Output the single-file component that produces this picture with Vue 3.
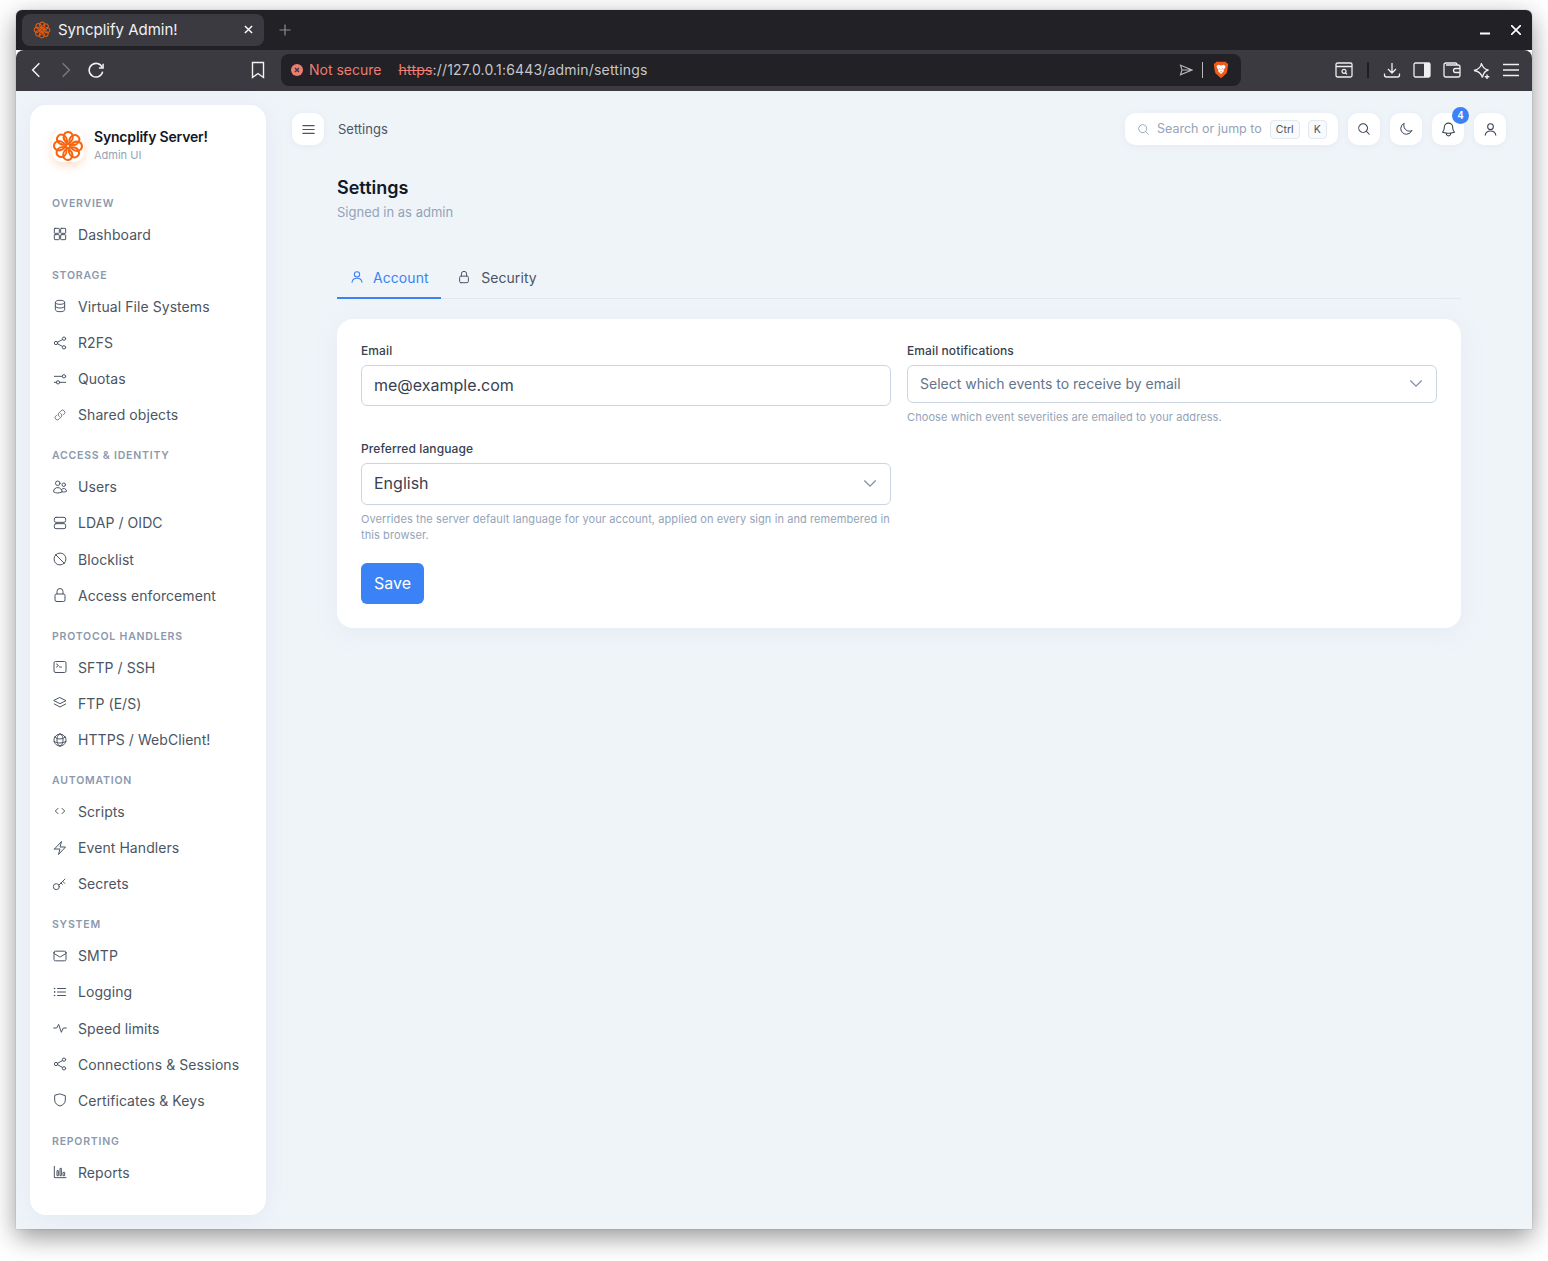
<template>
  <div class="shot">
    <div class="window">
      <div class="tabbar">
        <div class="tab">
          <svg class="tab-logo" viewBox="0 0 32 32" fill="none" stroke="#e85a0c" stroke-width="1.9">
            <path v-for="a in petals" :key="a" :d="petal" :transform="`rotate(${a} 16 16)`" />
          </svg>
          <span class="tab-title">Syncplify Admin!</span>
          <svg class="tab-x" viewBox="0 0 10 10" stroke="#fff" stroke-width="1.6"><path d="M1 1l8 8M9 1l-8 8" /></svg>
        </div>
        <svg class="new-tab" viewBox="0 0 12 12" stroke="#8c8c92" stroke-width="1.2"><path d="M6 .5v11M.5 6h11" /></svg>
        <div class="win-btns">
          <svg class="win-min" viewBox="0 0 10 10" stroke="#fff" stroke-width="1.8"><path d="M0 8.500h10" /></svg>
          <svg class="win-close" viewBox="0 0 10 10" stroke="#fff" stroke-width="1.7"><path d="M0 0l10 10M10 0L0 10" /></svg>
        </div>
      </div>

      <div class="toolbar">
        <div class="nav-btns">
          <svg class="nav" viewBox="0 0 24 24" fill="none" stroke="#f2f2f3" stroke-width="1.8"><path d="M16 4l-8 8 8 8" /></svg>
          <svg class="nav" viewBox="0 0 24 24" fill="none" stroke="#77777c" stroke-width="1.8"><path d="M8 4l8 8-8 8" /></svg>
          <svg class="nav" viewBox="0 0 24 24" fill="none" stroke="#f2f2f3" stroke-width="1.8"><path d="M19.500 9A8.200 8.200 0 1 0 20 14" /><path d="M20.500 4.500v5h-5" /></svg>
        </div>
        <svg class="bookmark" viewBox="0 0 14 18" fill="none" stroke="#f2f2f3" stroke-width="1.4"><path d="M1.500 1.500h11v15L7 12.500l-5.500 4z" /></svg>
        <div class="urlbar">
          <svg class="warn" viewBox="0 0 12 12"><circle cx="6" cy="6" r="6" fill="#ee7c70" /><path d="M4 4l4 4M8 4l-4 4" stroke="#3a3a40" stroke-width="1.5" /></svg>
          <span class="not-secure">Not secure</span>
          <span class="url"><s class="https">https</s>://127.0.0.1:6443/admin/settings</span>
          <svg class="send" viewBox="0 0 14 12" fill="none" stroke="#b9b9bd" stroke-width="1.1"><path d="M1.500 1.200L13 6 1.500 10.800 3 6zM3 6h10" /></svg>
          <span class="url-sep"></span>
          <svg class="brave" viewBox="0 0 16 18">
            <path d="M3.400.8h9.200l1.300 1.500 1.300.4-.6 5.300-1 4.200L8 17.300 2.400 12.200l-1-4.200L.8 2.700l1.300-.4z" fill="#f25a1c" />
            <path d="M3.500 5l2-1.200L8 4.500l2.500-.7 2 1.200-.8 2.500-1.200 1 .5 1.500L8 13 5 10l.5-1.500-1.200-1z" fill="#fff" />
            <path d="M6.300 7.600l1 .8M9.700 7.600l-1 .8M8 10v1.300" stroke="#f25a1c" stroke-width=".9" />
          </svg>
        </div>
        <div class="tool-icons">
          <svg class="ti" viewBox="0 0 18 16" fill="none" stroke="#efeff0" stroke-width="1.3"><rect x="1" y="1" width="16" height="14" rx="1.500" /><path d="M1 4.500h16" /><circle cx="9" cy="9.300" r="2" stroke-width="1.2" /><path d="M10.500 10.800l1.500 1.500" stroke-width="1.2" /></svg>
          <span class="tool-sep"></span>
          <svg class="ti" viewBox="0 0 18 16" fill="none" stroke="#efeff0" stroke-width="1.3"><path d="M9 1v10M5 7l4 4 4-4M1.500 11.500V13a2 2 0 0 0 2 2h11a2 2 0 0 0 2-2v-1.500" /></svg>
          <svg class="ti ti-gap" viewBox="0 0 18 16"><rect x="1" y="1" width="16" height="14" rx="1.500" fill="none" stroke="#efeff0" stroke-width="1.3" /><rect x="11" y="1" width="6" height="14" fill="#efeff0" /></svg>
          <svg class="ti ti-gap" viewBox="0 0 18 16" fill="none" stroke="#efeff0" stroke-width="1.3"><path d="M14 3v-.5A1.500 1.500 0 0 0 12.500 1H3a2 2 0 0 0-2 2v10a2 2 0 0 0 2 2h12a2 2 0 0 0 2-2V5a2 2 0 0 0-2-2H3" /><path d="M17 6.500h-4.500a2 2 0 0 0 0 4H17" /></svg>
          <svg class="ti ti-gap ti-star" viewBox="0 0 18 18" fill="none" stroke="#efeff0" stroke-width="1.3"><path d="M8.500 1c.6 4 2.500 6.200 7 7-3.600.8-5.200 2.500-6 7.500C8 11 6 9 1 8.500 5.500 7.500 8 5 8.500 1z" /><path d="M14 12.500V17M11.800 14.800h4.500" stroke-width="1.4" /></svg>
          <svg class="ti ti-gap ti-menu" viewBox="0 0 16 14" stroke="#efeff0" stroke-width="1.3"><path d="M0 1.500h16M0 7h16M0 12.500h16" /></svg>
        </div>
      </div>

      <div class="page">
        <aside class="sidebar">
          <div class="brand">
            <div class="brand-logo">
              <svg viewBox="0 0 32 32" fill="none" stroke="#f9640f" stroke-width="2">
                <path v-for="a in petals" :key="a" :d="petal" :transform="`rotate(${a} 16 16)`" />
              </svg>
            </div>
            <div class="brand-text">
              <div class="brand-name">Syncplify Server!</div>
              <div class="brand-sub">Admin UI</div>
            </div>
          </div>

          <div v-for="group in nav" :key="group.title" class="nav-group">
            <div class="nav-title">{{ group.title }}</div>
            <div v-for="item in group.items" :key="item.label" class="nav-item">
              <svg class="nav-icon" :class="{ sm: item.small }" viewBox="0 0 24 24" fill="none" stroke="#4b5563" stroke-width="1.5" stroke-linecap="round" stroke-linejoin="round">
                <path :d="icons[item.icon]" />
              </svg>
              <span>{{ item.label }}</span>
            </div>
          </div>
        </aside>

        <main class="main">
          <header class="topbar">
            <button class="icon-btn">
              <svg viewBox="0 0 24 24" fill="none" stroke="#4b5563" stroke-width="1.5" stroke-linecap="round"><path d="M4 6.500h16M4 12h16M4 17.500h16" /></svg>
            </button>
            <div class="crumb">Settings</div>
            <div class="search">
              <svg class="search-icon" viewBox="0 0 24 24" fill="none" stroke="#94a3b8" stroke-width="1.7" stroke-linecap="round"><path :d="icons.search" /></svg>
              <span class="search-text">Search or jump to</span>
              <kbd class="key key-ctrl">Ctrl</kbd>
              <kbd class="key key-k">K</kbd>
            </div>
            <button class="icon-btn small">
              <svg viewBox="0 0 24 24" fill="none" stroke="#374151" stroke-width="1.8" stroke-linecap="round"><path :d="icons.search" /></svg>
            </button>
            <button class="icon-btn small">
              <svg viewBox="0 0 24 24" fill="none" stroke="#374151" stroke-width="1.7" stroke-linecap="round" stroke-linejoin="round"><path :d="icons.moon" /></svg>
            </button>
            <button class="icon-btn">
              <svg viewBox="0 0 24 24" fill="none" stroke="#374151" stroke-width="1.5" stroke-linecap="round" stroke-linejoin="round"><path :d="icons.bell" /></svg>
              <span class="badge">4</span>
            </button>
            <button class="icon-btn">
              <svg viewBox="0 0 24 24" fill="none" stroke="#374151" stroke-width="1.5" stroke-linecap="round" stroke-linejoin="round"><path :d="icons.user" /></svg>
            </button>
          </header>

          <section class="content">
            <h1>Settings</h1>
            <p class="signed">Signed in as admin</p>

            <div class="tabs">
              <div class="pane-tab active">
                <svg class="tab-user" viewBox="0 0 24 24" fill="none" stroke="#3b82f6" stroke-width="1.6" stroke-linecap="round" stroke-linejoin="round"><path :d="icons.user" /></svg>
                Account
              </div>
              <div class="pane-tab">
                <svg class="tab-lock" viewBox="0 0 24 24" fill="none" stroke="#4b5563" stroke-width="1.7" stroke-linecap="round" stroke-linejoin="round"><path :d="icons.lock" /></svg>
                Security
              </div>
            </div>

            <div class="card">
              <div class="form-grid">
                <div class="field">
                  <label>Email</label>
                  <div class="control control-email">me@example.com</div>
                </div>
                <div class="field">
                  <label>Email notifications</label>
                  <div class="control control-multi">
                    <span class="placeholder">Select which events to receive by email</span>
                    <svg class="chev" viewBox="0 0 16 10" fill="none" stroke="#8391a6" stroke-width="1.5"><path d="M1.500 1.500L8 8l6.500-6.500" /></svg>
                  </div>
                  <div class="hint">Choose which event severities are emailed to your address.</div>
                </div>
              </div>
              <div class="field lang">
                <label>Preferred language</label>
                <div class="control control-lang">
                  <span>English</span>
                  <svg class="chev" viewBox="0 0 16 10" fill="none" stroke="#8391a6" stroke-width="1.5"><path d="M1.500 1.500L8 8l6.500-6.500" /></svg>
                </div>
                <div class="hint">Overrides the server default language for your account, applied on every sign in and remembered in this browser.</div>
              </div>
              <button class="save">Save</button>
            </div>
          </section>
        </main>
      </div>
    </div>
  </div>
</template>

<script setup>
const petals = [0, 45, 90, 135, 180, 225, 270, 315]

// one loop of the flower logo, leans to the side so the loops overlap
const petal = 'M16.500 14C12.500 11.500 11 8 12 5c1.200-3.500 6-4 8-1 2 3 .5 7-3.500 10z'

const icons = {
  grid: 'M4.500 3.500h5.500a1 1 0 0 1 1 1V10a1 1 0 0 1-1 1H4.500a1 1 0 0 1-1-1V4.500a1 1 0 0 1 1-1zM14 3.500h5.500a1 1 0 0 1 1 1V10a1 1 0 0 1-1 1H14a1 1 0 0 1-1-1V4.500a1 1 0 0 1 1-1zM4.500 13H10a1 1 0 0 1 1 1v5.500a1 1 0 0 1-1 1H4.500a1 1 0 0 1-1-1V14a1 1 0 0 1 1-1zM14 13h5.500a1 1 0 0 1 1 1v5.500a1 1 0 0 1-1 1H14a1 1 0 0 1-1-1V14a1 1 0 0 1 1-1z',
  db: 'M5 6.500C5 4.500 8 3.500 12 3.500s7 1 7 3v11c0 2-3 3-7 3s-7-1-7-3zM5 6.500c0 2 3 3 7 3s7-1 7-3M5 12c0 2 3 3 7 3s7-1 7-3',
  share: 'M8.300 10.800l7.400-3.900M8.300 13.200l7.400 3.900M8.500 12a2.500 2.500 0 1 1-5 0 2.500 2.500 0 0 1 5 0zM20.500 5.500a2.500 2.500 0 1 1-5 0 2.500 2.500 0 0 1 5 0zM20.500 18.500a2.500 2.500 0 1 1-5 0 2.500 2.500 0 0 1 5 0z',
  sliders: 'M3.500 8h11.500M3.500 17h3.500M11.500 17h9M20.500 8a2.500 2.500 0 1 1-5 0 2.500 2.500 0 0 1 5 0zM11.500 17a2.500 2.500 0 1 1-5 0 2.500 2.500 0 0 1 5 0z',
  link: 'M13.190 8.688a4.500 4.500 0 0 1 1.242 7.244l-4.500 4.500a4.500 4.500 0 0 1-6.364-6.364l1.757-1.757m13.350-.622 1.757-1.757a4.500 4.500 0 0 0-6.364-6.364l-4.500 4.500a4.500 4.500 0 0 0 1.242 7.244',
  users: 'M15 19.128a9.380 9.380 0 0 0 2.625.372 9.337 9.337 0 0 0 4.121-.952 4.125 4.125 0 0 0-7.533-2.493M15 19.128v-.003c0-1.113-.285-2.160-.786-3.070M15 19.128v.106A12.318 12.318 0 0 1 8.624 21c-2.331 0-4.512-.645-6.374-1.766l-.001-.109a6.375 6.375 0 0 1 11.964-3.070M12 6.375a3.375 3.375 0 1 1-6.750 0 3.375 3.375 0 0 1 6.750 0Zm8.250 2.250a2.625 2.625 0 1 1-5.250 0 2.625 2.625 0 0 1 5.250 0Z',
  server: 'M6 3.500h12A2.500 2.500 0 0 1 20.500 6v2.500A2.500 2.500 0 0 1 18 11H6a2.500 2.500 0 0 1-2.500-2.500V6A2.500 2.500 0 0 1 6 3.500zM6 13h12a2.500 2.500 0 0 1 2.500 2.500V18a2.500 2.500 0 0 1-2.500 2.500H6A2.500 2.500 0 0 1 3.500 18v-2.500A2.500 2.500 0 0 1 6 13z',
  block: 'M18.364 18.364A9 9 0 0 0 5.636 5.636m12.728 12.728A9 9 0 0 1 5.636 5.636m12.728 12.728L5.636 5.636',
  lock: 'M16.500 10.500V6.750a4.500 4.500 0 1 0-9 0v3.750m-.75 11.250h10.500a2.250 2.250 0 0 0 2.250-2.250v-6.750a2.250 2.250 0 0 0-2.250-2.250H6.750a2.250 2.250 0 0 0-2.250 2.250v6.750a2.250 2.250 0 0 0 2.250 2.250Z',
  terminal: 'm6.750 7.500 3 2.250-3 2.250m4.500 0h3m-9 8.250h13.500A2.250 2.250 0 0 0 21 18V6a2.250 2.250 0 0 0-2.250-2.250H5.250A2.250 2.250 0 0 0 3 6v12a2.250 2.250 0 0 0 2.250 2.250Z',
  layers: 'M12 4l9 4.500-9 4.500-9-4.500zM3.500 13.500l8.500 4.500 8.500-4.500',
  globe: 'M12 21a9.004 9.004 0 0 0 8.716-6.747M12 21a9.004 9.004 0 0 1-8.716-6.747M12 21c2.485 0 4.500-4.030 4.500-9S14.485 3 12 3m0 18c-2.485 0-4.500-4.030-4.500-9S9.515 3 12 3m0 0a8.997 8.997 0 0 1 7.843 4.582M12 3a8.997 8.997 0 0 0-7.843 4.582m15.686 0A11.953 11.953 0 0 1 12 10.500c-2.998 0-5.740-1.100-7.843-2.918m15.686 0A8.959 8.959 0 0 1 21 12c0 .778-.099 1.533-.284 2.253m0 0A17.919 17.919 0 0 1 12 16.500c-3.162 0-6.133-.815-8.716-2.247m0 0A9.015 9.015 0 0 1 3 12c0-1.605.420-3.113 1.157-4.418',
  code: 'M9 8l-4 4 4 4M15 8l4 4-4 4',
  bolt: 'm3.750 13.500 10.500-11.250L12 10.500h8.250L9.750 21.750 12 13.500H3.750Z',
  key: 'M10.500 13.500l9-9M16 8l3 3M13.500 10.500l2 2M11 16a4.500 4.500 0 1 1-9 0 4.500 4.500 0 0 1 9 0z',
  mail: 'M21 6.750v10.500a2 2 0 0 1-2 2H5a2 2 0 0 1-2-2V6.750m18 0a2 2 0 0 0-2-2H5a2 2 0 0 0-2 2m18 0v.3a2 2 0 0 1-1 1.700l-7 4.300a2 2 0 0 1-2 0l-7-4.300a2 2 0 0 1-1-1.700v-.3',
  list: 'M8.250 6.750h12M8.250 12h12m-12 5.250h12M3.750 6.750h.007v.008H3.750V6.750Zm.375 0a.375.375 0 1 1-.75 0 .375.375 0 0 1 .75 0ZM3.750 12h.007v.008H3.750V12Zm.375 0a.375.375 0 1 1-.75 0 .375.375 0 0 1 .75 0Zm-.375 5.250h.007v.008H3.750v-.008Zm.375 0a.375.375 0 1 1-.75 0 .375.375 0 0 1 .75 0Z',
  pulse: 'M2.500 12h4.500l3-5.500 4 12 3-6.500h4.500',
  shield: 'M12 3l8 2.500v6.500c0 5-3.500 7.500-8 9-4.500-1.500-8-4-8-9V5.500z',
  chart: 'M3.500 3.500v17H21M7.500 17v-7h2v7zM12 17V6.500h2V17zM16.500 17v-4.500h2.500V17z',
  search: 'm21 21-5.197-5.197m0 0A7.500 7.500 0 1 0 5.196 5.196a7.500 7.500 0 0 0 10.607 10.607Z',
  moon: 'M21.752 15.002A9.720 9.720 0 0 1 18 15.750c-5.385 0-9.750-4.365-9.750-9.750 0-1.330.266-2.597.748-3.752A9.753 9.753 0 0 0 3 11.250C3 16.635 7.365 21 12.750 21a9.753 9.753 0 0 0 9.002-5.998Z',
  bell: 'M14.857 17.082a23.848 23.848 0 0 0 5.454-1.310A8.967 8.967 0 0 1 18 9.750V9A6 6 0 0 0 6 9v.75a8.967 8.967 0 0 1-2.312 6.022c1.733.640 3.560 1.085 5.455 1.310m5.714 0a24.255 24.255 0 0 1-5.714 0m5.714 0a3 3 0 1 1-5.714 0',
  user: 'M16 8a4 4 0 1 1-8 0 4 4 0 0 1 8 0zM4.500 20c.5-4 3.500-6 7.500-6s7 2 7.500 6',
}

const nav = [
  { title: 'OVERVIEW', items: [{ label: 'Dashboard', icon: 'grid' }] },
  {
    title: 'STORAGE',
    items: [
      { label: 'Virtual File Systems', icon: 'db' },
      { label: 'R2FS', icon: 'share' },
      { label: 'Quotas', icon: 'sliders' },
      { label: 'Shared objects', icon: 'link', small: true },
    ],
  },
  {
    title: 'ACCESS & IDENTITY',
    items: [
      { label: 'Users', icon: 'users' },
      { label: 'LDAP / OIDC', icon: 'server' },
      { label: 'Blocklist', icon: 'block' },
      { label: 'Access enforcement', icon: 'lock' },
    ],
  },
  {
    title: 'PROTOCOL HANDLERS',
    items: [
      { label: 'SFTP / SSH', icon: 'terminal' },
      { label: 'FTP (E/S)', icon: 'layers' },
      { label: 'HTTPS / WebClient!', icon: 'globe' },
    ],
  },
  {
    title: 'AUTOMATION',
    items: [
      { label: 'Scripts', icon: 'code' },
      { label: 'Event Handlers', icon: 'bolt' },
      { label: 'Secrets', icon: 'key' },
    ],
  },
  {
    title: 'SYSTEM',
    items: [
      { label: 'SMTP', icon: 'mail' },
      { label: 'Logging', icon: 'list' },
      { label: 'Speed limits', icon: 'pulse' },
      { label: 'Connections & Sessions', icon: 'share' },
      { label: 'Certificates & Keys', icon: 'shield' },
    ],
  },
  { title: 'REPORTING', items: [{ label: 'Reports', icon: 'chart' }] },
]
</script>

<style scoped>
.shot {
  width: 1548px;
  height: 1261px;
  padding: 10px 16px 32px;
  box-sizing: border-box;
  background: #fff;
  font-family: Inter, "Liberation Sans", sans-serif;
  overflow: hidden;
}

.window {
  width: 1516px;
  height: 1219px;
  display: flex;
  flex-direction: column;
  border-radius: 6px 6px 0 0;
  overflow: hidden;
  box-shadow: 0 8px 26px rgba(0, 0, 0, 0.42), 0 0 1px rgba(0, 0, 0, 0.5);
}

.tabbar {
  height: 40px;
  flex: none;
  display: flex;
  align-items: center;
  padding-left: 6px;
  background: #212126;
}

.tab {
  width: 242px;
  height: 32px;
  box-sizing: border-box;
  display: flex;
  align-items: center;
  padding: 0 11px 1px 11px;
  background: #3a3a40;
  border-radius: 8px;
}

.tab-logo {
  width: 18px;
  height: 18px;
  flex: none;
}

.tab-title {
  flex: 1;
  margin-left: 7px;
  font-size: 15px;
  color: #f1f1f2;
}

.tab-x {
  width: 9px;
  height: 9px;
}

.new-tab {
  width: 12px;
  height: 12px;
  margin-left: 15px;
}

.win-btns {
  margin-left: auto;
  display: flex;
  align-items: center;
  gap: 21px;
  padding-right: 11px;
}

.win-min,
.win-close {
  width: 10px;
  height: 10px;
}

.toolbar {
  height: 41px;
  flex: none;
  box-sizing: border-box;
  padding-bottom: 1px;
  display: flex;
  align-items: center;
  background: #3a3a40;
  border-radius: 8px 8px 0 0;
}

.nav-btns {
  display: flex;
  align-items: center;
  gap: 10px;
  padding-left: 10px;
}

.nav {
  width: 20px;
  height: 20px;
}

.bookmark {
  width: 14px;
  height: 18px;
  margin-left: 145px;
}

.urlbar {
  width: 960px;
  height: 32px;
  box-sizing: border-box;
  margin-left: 16px;
  padding: 0 12px 0 10px;
  display: flex;
  align-items: center;
  background: #212126;
  border-radius: 8px;
  font-size: 14px;
}

.warn {
  width: 12px;
  height: 12px;
}

.not-secure {
  margin-left: 6px;
  padding-bottom: 2px;
  color: #ee7c70;
}

.url {
  margin-left: 17px;
  padding-bottom: 2px;
  flex: 1;
  letter-spacing: 0.18px;
  color: #c6c6ca;
}

.https {
  color: #ee7c70;
}

.send {
  width: 14px;
  height: 12px;
  margin-left: -1px;
}

.url-sep {
  width: 1px;
  height: 16px;
  margin: 0 10px 0 9px;
  background: #b9b9bd;
}

.brave {
  width: 16px;
  height: 18px;
}

.tool-icons {
  margin-left: 94px;
  display: flex;
  align-items: center;
}

.ti {
  height: 16px;
  width: 18px;
  flex: none;
}

.tool-sep {
  width: 2px;
  height: 16px;
  margin: 0 14px;
  background: #1f1f23;
}

.ti-gap {
  margin-left: 12px;
}

.ti-star {
  height: 18px;
  margin-top: 1px;
}

.ti-menu {
  width: 16px;
  height: 14px;
}

.page {
  flex: 1;
  min-height: 0;
  display: flex;
  background: #eff4f9;
}

.sidebar {
  width: 236px;
  height: 1110px;
  flex: none;
  box-sizing: border-box;
  margin: 14px 0 0 14px;
  padding: 24px 22px 0;
  background: #fff;
  border-radius: 16px;
  box-shadow: 0 4px 24px rgba(148, 163, 184, 0.12);
}

.brand {
  display: flex;
  gap: 10px;
  height: 36px;
  margin-bottom: 32px;
}

.brand-logo {
  width: 32px;
  height: 32px;
  margin-top: 1px;
  border-radius: 10px;
  box-shadow: 0 4px 10px rgba(249, 100, 15, 0.2);
}

.brand-logo svg {
  width: 32px;
  height: 32px;
  display: block;
}

.brand-text {
  margin-top: -1px;
}

.brand-name {
  font-size: 14px;
  line-height: 18px;
  font-weight: 600;
  letter-spacing: -0.18px;
  color: #111827;
}

.brand-sub {
  font-size: 11px;
  line-height: 16px;
  margin-top: 1px;
  color: #94a3b8;
}

.nav-group {
  margin-bottom: 16.3px;
}

.nav-title {
  height: 14px;
  line-height: 14px;
  font-size: 10.5px;
  font-weight: 600;
  letter-spacing: 0.075em;
  color: #8a99ad;
  margin-bottom: 5.4px;
}

.nav-item {
  height: 36.2px;
  display: flex;
  align-items: center;
  gap: 10px;
  font-size: 14px;
  letter-spacing: 0.07px;
  color: #4b5563;
}

.nav-icon {
  width: 16px;
  height: 16px;
  flex: none;
}

.nav-icon.sm {
  box-sizing: border-box;
  padding: 2px;
}

.main {
  flex: 1;
  min-width: 0;
}

.topbar {
  height: 32px;
  margin: 22px 26px 0;
  display: flex;
  align-items: center;
}

.icon-btn {
  position: relative;
  width: 32px;
  height: 32px;
  flex: none;
  padding: 0;
  display: flex;
  align-items: center;
  justify-content: center;
  background: #fff;
  border: none;
  border-radius: 10px;
  box-shadow: 0 1px 6px rgba(148, 163, 184, 0.12);
}

.icon-btn svg {
  width: 17px;
  height: 17px;
}

.icon-btn.small svg {
  width: 14px;
  height: 14px;
}

.icon-btn + .icon-btn {
  margin-left: 10px;
}

.crumb {
  margin-left: 14px;
  flex: 1;
  font-size: 13px;
  color: #4b5563;
}

.search {
  width: 213px;
  height: 32px;
  box-sizing: border-box;
  margin-right: 10px;
  padding: 0 11px 0 12px;
  display: flex;
  align-items: center;
  background: #fff;
  border-radius: 10px;
  box-shadow: 0 1px 6px rgba(148, 163, 184, 0.12);
}

.search-icon {
  width: 13px;
  height: 13px;
  flex: none;
}

.search-text {
  margin-left: 7px;
  padding-bottom: 2px;
  font-size: 12.5px;
  white-space: nowrap;
  color: #94a3b8;
}

.key {
  height: 19px;
  box-sizing: border-box;
  display: flex;
  align-items: center;
  justify-content: center;
  flex: none;
  font-family: Inter, "Liberation Sans", sans-serif;
  font-size: 10.5px;
  color: #4b5563;
  background: #f8fafc;
  border: 1px solid #e2e8f0;
  border-radius: 4px;
}

.key-ctrl {
  width: 30px;
  margin-left: 8px;
}

.key-k {
  width: 19px;
  margin-left: 8px;
}

.badge {
  position: absolute;
  top: -6px;
  right: -5px;
  width: 17px;
  height: 17px;
  display: flex;
  align-items: center;
  justify-content: center;
  border-radius: 50%;
  background: #3b82f6;
  color: #fff;
  font-size: 10px;
  font-weight: 600;
}

.content {
  margin: 31px 71px 0;
}

h1 {
  margin: 0;
  font-size: 18px;
  line-height: 24px;
  font-weight: 600;
  color: #111827;
}

.signed {
  margin: 2px 0 0;
  font-size: 13px;
  line-height: 20px;
  color: #94a3b8;
}

.tabs {
  margin-top: 33px;
  height: 44px;
  box-sizing: border-box;
  display: flex;
  border-bottom: 1px solid #e2e8f0;
}

.pane-tab {
  height: 44px;
  box-sizing: border-box;
  display: flex;
  align-items: center;
  gap: 9px;
  padding: 0 12px;
  font-size: 14px;
  letter-spacing: 0.07px;
  color: #4b5563;
}

.tab-user {
  width: 16px;
  height: 16px;
  margin-right: -1px;
}

.tab-lock {
  width: 14px;
  height: 14px;
  margin-right: 1px;
}

.pane-tab.active {
  padding-top: 2px;
  color: #3b82f6;
  border-bottom: 2px solid #3b82f6;
}

.pane-tab + .pane-tab {
  margin-left: 4.5px;
}

.card {
  margin-top: 20px;
  height: 309px;
  box-sizing: border-box;
  padding: 24px;
  background: #fff;
  border-radius: 16px;
  box-shadow: 0 4px 24px rgba(148, 163, 184, 0.1);
}

.form-grid {
  display: grid;
  grid-template-columns: 530px 530px;
  column-gap: 16px;
  height: 98px;
}

.field label {
  display: block;
  font-size: 12px;
  line-height: 16px;
  font-weight: 500;
  letter-spacing: 0.1px;
  color: #374151;
  margin-bottom: 6px;
}

.control {
  box-sizing: border-box;
  display: flex;
  align-items: center;
  justify-content: space-between;
  padding: 0 13px 2px 12px;
  background: #fff;
  border: 1px solid #cbd5e1;
  border-radius: 6px;
  font-size: 16px;
  color: #374151;
}

.control-email {
  height: 41px;
}

.control-multi {
  height: 38px;
  font-size: 14px;
}

.placeholder {
  color: #64748b;
}

.control-lang {
  height: 42px;
}

.chev {
  width: 14px;
  height: 9px;
}

.hint {
  margin-top: 6px;
  font-size: 11px;
  line-height: 16px;
  letter-spacing: 0.09px;
  color: #94a3b8;
}

.lang {
  width: 530px;
}

.save {
  display: block;
  width: 63px;
  height: 41px;
  margin-top: 20px;
  padding: 0 0 2px;
  background: #3b82f6;
  color: #fff;
  border: none;
  border-radius: 6px;
  font-family: inherit;
  font-size: 16px;
}
</style>

<style>
html,
body {
  margin: 0;
  background: #fff;
}
</style>
